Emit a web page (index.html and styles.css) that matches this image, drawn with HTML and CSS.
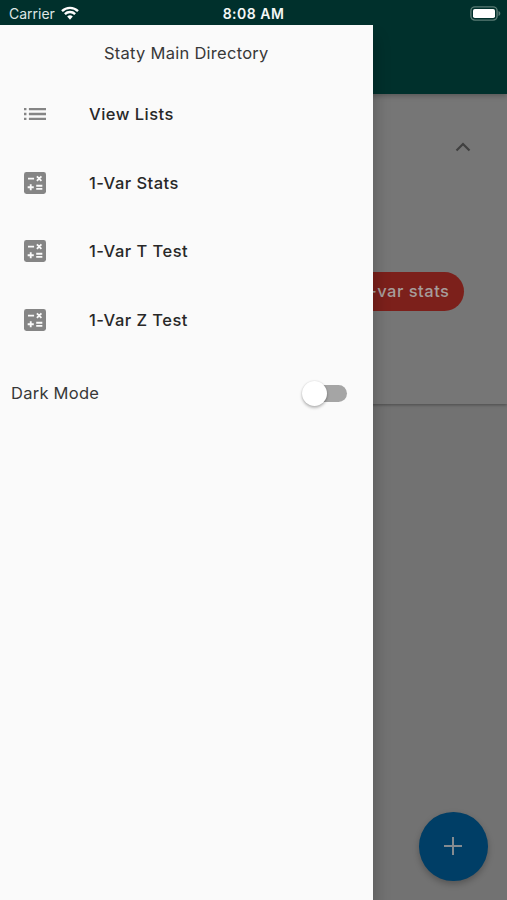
FILE: index.html
```html
<!DOCTYPE html>
<html lang="en">
<head>
<meta charset="utf-8">
<title>Staty</title>
<link rel="stylesheet" href="styles.css">
</head>
<body>
<svg class="defs" width="0" height="0">
  <symbol id="calc" viewBox="3 3 18 18">
    <path fill="#858585" d="M5 3h14a2 2 0 0 1 2 2v14a2 2 0 0 1-2 2H5a2 2 0 0 1-2-2V5a2 2 0 0 1 2-2z"/>
    <path stroke="#fafafa" stroke-width="1.5" fill="none" d="M6.25 8.45h5M13.55 6.55l3.7 3.7M17.25 6.55l-3.7 3.7M6 15.5h5M8.5 13v5M13 14.25h5M13 16.75h5"/>
  </symbol>
</svg>
<div class="screen">
  <main class="page">
    <header class="appbar"></header>
    <section class="card">
      <svg class="chevron" viewBox="0 0 16 10"><path d="M1.5 8.5 8 2l6.5 6.5"/></svg>
      <div class="chip">1-var stats</div>
    </section>
    <button class="fab" aria-label="Add"><svg viewBox="0 0 18 18"><path d="M9 0v18M0 9h18"/></svg></button>
  </main>
  <div class="statusbar">
    <div class="carrier"><span>Carrier</span>
      <svg class="wifi" viewBox="0 0 18 14"><path d="M1 5.1a11.5 11.5 0 0 1 16 0M3.9 8.1a7.2 7.2 0 0 1 10.2 0"/><path class="dot" d="M6.2 10.6a4 4 0 0 1 5.6 0L9 13.7z"/></svg>
    </div>
    <div class="time">8:08 AM</div>
    <svg class="battery" viewBox="0 0 31 15"><rect class="case" x=".9" y=".9" width="26.2" height="13.2" rx="4"/><rect class="charge" x="3" y="3" width="22" height="9" rx="1.8"/><path class="tip" d="M28.5 5c2.4.8 2.4 4.2 0 5z"/></svg>
  </div>
  <aside class="drawer">
    <h1 class="title">Staty Main Directory</h1>
    <nav>
      <a class="item"><svg class="icon" viewBox="3 3 18 18"><path fill="#858585" d="M3 7h2v2H3zM7 7h14v2H7zM3 11h2v2H3zM7 11h14v2H7zM3 15h2v2H3zM7 15h14v2H7z"/></svg><span>View Lists</span></a>
      <a class="item"><svg class="icon"><use href="#calc"/></svg><span>1-Var Stats</span></a>
      <a class="item"><svg class="icon"><use href="#calc"/></svg><span>1-Var T Test</span></a>
      <a class="item"><svg class="icon"><use href="#calc"/></svg><span>1-Var Z Test</span></a>
    </nav>
    <div class="mode"><span>Dark Mode</span><div class="switch"><i class="knob"></i></div></div>
  </aside>
</div>
</body>
</html>
```
FILE: styles.css
```css
* { box-sizing: border-box; }
body { margin: 0; font-family: Inter, sans-serif; }
.defs { position: absolute; }
.screen { position: relative; width: 507px; height: 900px; overflow: hidden; }
.page { height: 900px; background: #727272; }
.appbar { position: relative; z-index: 1; height: 94px; background: #00302c; box-shadow: 0 2px 5px rgba(0,0,0,.25); }
.card {
  height: 310px; padding: 48px 43px 0; background: #767676;
  display: flex; flex-direction: column; align-items: flex-end;
  box-shadow: 0 1px 3px rgba(0,0,0,.35);
}
.chevron { width: 16px; height: 10px; margin-right: -7px; fill: none; stroke: #404040; stroke-width: 2.2; }
.chip {
  margin-top: 120px; height: 39px; padding: 0 14.5px; border-radius: 20px;
  background: #7c201b; color: #a69c9a;
  font-size: 16.5px; line-height: 39px; letter-spacing: .5px; font-weight: 500;
}
.fab {
  position: absolute; right: 19.5px; bottom: 19.5px; width: 68.5px; height: 68.5px;
  display: flex; align-items: center; justify-content: center;
  padding: 0; border: 0; border-radius: 50%; background: #003e66;
  box-shadow: 0 3px 6px rgba(0,0,0,.25);
}
.fab svg { width: 18px; height: 18px; stroke: #858b90; stroke-width: 2; }
.statusbar {
  position: absolute; inset: 0 0 auto; height: 25px; padding: 0 9px;
  display: grid; grid-template-columns: 1fr auto 1fr; align-items: center;
  background: #00302c; color: #f4f7f6; z-index: 2;
}
.carrier { display: flex; align-items: center; gap: 6px; font-size: 14px; padding-top: 2px; }
.carrier span { color: #dfe6e5; }
.wifi { width: 18px; height: 14px; margin-top: -2px; fill: none; stroke: #fff; stroke-width: 2.4; }
.wifi .dot { fill: #fff; stroke: none; }
.time { font-size: 14px; font-weight: 600; letter-spacing: .5px; padding-top: 2px; }
.battery { width: 31px; height: 15px; justify-self: end; margin: 1px -3px 0 0; }
.case { fill: none; stroke: #597b74; stroke-width: 1.4; }
.charge { fill: #fff; }
.tip { fill: #597b74; }
.drawer {
  position: absolute; z-index: 3; left: 0; top: 25px; bottom: 0; width: 372.5px;
  background: #fafafa; color: #383838; box-shadow: 3px 12px 14px rgba(0,0,0,.2);
  clip-path: inset(0 -40px 0 0);
}
.title { margin: 0; height: 55px; line-height: 56px; text-align: center; font-size: 16.5px; font-weight: 400; letter-spacing: .27px; }
.item { display: flex; align-items: center; height: 68.5px; padding-left: 24px; gap: 43px; color: #282828; font-size: 16.5px; font-weight: 500; letter-spacing: .47px; }
.icon { width: 22px; height: 22px; }
.mode { display: flex; align-items: center; justify-content: space-between; height: 78px; padding: 0 25.5px 0 11px; font-size: 16.5px; letter-spacing: .25px; }
.switch { position: relative; width: 40px; height: 17px; border-radius: 9px; background: #a5a5a5; }
.knob { position: absolute; left: -5px; top: -4px; width: 25px; height: 25px; border-radius: 50%; background: #fff; box-shadow: 0 2px 3px rgba(0,0,0,.25), 0 0 2px rgba(0,0,0,.15); }
```
